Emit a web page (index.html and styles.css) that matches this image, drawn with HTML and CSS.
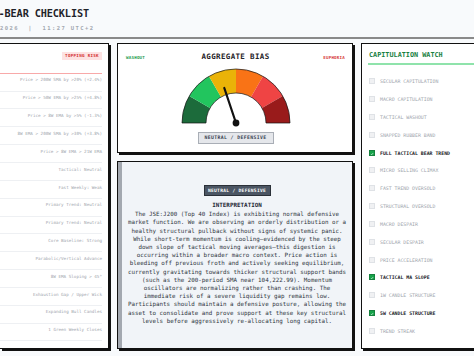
FILE: index.html
```html
<!DOCTYPE html>
<html lang="en">
<head>
<meta charset="utf-8">
<title>Bear Checklist</title>
<link rel="stylesheet" href="styles.css">
</head>
<body>
<header class="top">
  <h1 class="title">-BEAR CHECKLIST</h1>
  <div class="meta">2026  |  11:27 UTC+2</div>
</header>
<main class="grid">
  <section class="panel panel-left">
    <div class="left-head"><span class="risk-badge">TOPPING RISK</span></div>
    <ul class="rows">
      <li class="row">Price &gt; 200W SMA by &gt;20% (+2.4%)</li>
      <li class="row">Price &gt; 50W EMA by &gt;25% (+4.8%)</li>
      <li class="row">Price &gt; 8W EMA by &gt;5% (-1.3%)</li>
      <li class="row">8W EMA &gt; 200W SMA by &gt;30% (+3.8%)</li>
      <li class="row">Price &gt; 8W EMA &gt; 21W EMA</li>
      <li class="row">Tactical: Neutral</li>
      <li class="row">Fast Weekly: Weak</li>
      <li class="row">Primary Trend: Neutral</li>
      <li class="row">Primary Trend: Neutral</li>
      <li class="row">Core Baseline: Strong</li>
      <li class="row">Parabolic/Vertical Advance</li>
      <li class="row">8W EMA Sloping &gt; 45°</li>
      <li class="row">Exhaustion Gap / Upper Wick</li>
      <li class="row">Expanding Bull Candles</li>
      <li class="row">1 Green Weekly Closes</li>
    </ul>
  </section>

  <div class="center">
    <section class="gauge-card">
      <div class="gauge-labels">
        <span class="lbl lbl-wash">WASHOUT</span>
        <span class="gauge-title">AGGREGATE BIAS</span>
        <span class="lbl lbl-eup">EUPHORIA</span>
      </div>
      <svg class="gauge" width="112" height="60" viewBox="-56 -55 112 60" aria-hidden="true">
        <path d="M-54 0 A54 54 0 0 1 -46.77 -27 L-25.98 -15 A30 30 0 0 0 -30 0 Z" fill="#1c6b3b"/>
        <path d="M-46.77 -27 A54 54 0 0 1 -27 -46.77 L-15 -25.98 A30 30 0 0 0 -25.98 -15 Z" fill="#22c55e"/>
        <path d="M-27 -46.77 A54 54 0 0 1 0 -54 L0 -30 A30 30 0 0 0 -15 -25.98 Z" fill="#eab308"/>
        <path d="M0 -54 A54 54 0 0 1 27 -46.77 L15 -25.98 A30 30 0 0 0 0 -30 Z" fill="#f97316"/>
        <path d="M27 -46.77 A54 54 0 0 1 46.77 -27 L25.98 -15 A30 30 0 0 0 15 -25.98 Z" fill="#ef4444"/>
        <path d="M46.77 -27 A54 54 0 0 1 54 0 L30 0 A30 30 0 0 0 25.98 -15 Z" fill="#991b1b"/>
        <path d="M-54 0 A54 54 0 0 1 54 0 L30 0 A30 30 0 0 0 -30 0 Z" fill="none" stroke="#111" stroke-width="0.7"/>
        <line x1="0" y1="0" x2="-11.7" y2="-35" stroke="#111" stroke-width="2.2" stroke-linecap="round"/>
        <circle cx="0" cy="0" r="3.4" fill="#111"/>
      </svg>
      <div class="gauge-state">NEUTRAL / DEFENSIVE</div>
    </section>

    <section class="interp">
      <span class="interp-badge">NEUTRAL / DEFENSIVE</span>
      <h2 class="interp-title">INTERPRETATION</h2>
      <p class="interp-text">The JSE:J200 (Top 40 Index) is exhibiting normal defensive market function. We are observing an orderly distribution or a healthy structural pullback without signs of systemic panic. While short-term momentum is cooling—evidenced by the steep down slope of tactical moving averages—this digestion is occurring within a broader macro context. Price action is bleeding off previous froth and actively seeking equilibrium, currently gravitating towards thicker structural support bands (such as the 200-period SMA near 104,222.99). Momentum oscillators are normalizing rather than crashing. The immediate risk of a severe liquidity gap remains low. Participants should maintain a defensive posture, allowing the asset to consolidate and prove support at these key structural levels before aggressively re-allocating long capital.</p>
    </section>
  </div>

  <section class="panel panel-right">
    <div class="right-head"><h2 class="cap-title">CAPITULATION WATCH</h2></div>
    <ul class="checks">
      <li class="check"><span class="box"></span>SECULAR CAPITULATION</li>
      <li class="check"><span class="box"></span>MACRO CAPITULATION</li>
      <li class="check"><span class="box"></span>TACTICAL WASHOUT</li>
      <li class="check"><span class="box"></span>SNAPPED RUBBER BAND</li>
      <li class="check is-on"><span class="box"><svg width="6" height="6" viewBox="0 0 6 6"><path d="M1.4 3.1 L2.5 4.2 L4.6 1.7" fill="none" stroke="#fff" stroke-width="0.9"/></svg></span>FULL TACTICAL BEAR TREND</li>
      <li class="check"><span class="box"></span>MICRO SELLING CLIMAX</li>
      <li class="check"><span class="box"></span>FAST TREND OVERSOLD</li>
      <li class="check"><span class="box"></span>STRUCTURAL OVERSOLD</li>
      <li class="check"><span class="box"></span>MACRO DESPAIR</li>
      <li class="check"><span class="box"></span>SECULAR DESPAIR</li>
      <li class="check"><span class="box"></span>PRICE ACCELERATION</li>
      <li class="check is-on"><span class="box"><svg width="6" height="6" viewBox="0 0 6 6"><path d="M1.4 3.1 L2.5 4.2 L4.6 1.7" fill="none" stroke="#fff" stroke-width="0.9"/></svg></span>TACTICAL MA SLOPE</li>
      <li class="check"><span class="box"></span>1W CANDLE STRUCTURE</li>
      <li class="check is-on"><span class="box"><svg width="6" height="6" viewBox="0 0 6 6"><path d="M1.4 3.1 L2.5 4.2 L4.6 1.7" fill="none" stroke="#fff" stroke-width="0.9"/></svg></span>5W CANDLE STRUCTURE</li>
      <li class="check"><span class="box"></span>TREND STREAK</li>
    </ul>
  </section>
</main>
</body>
</html>
```

FILE: styles.css
```css
* { box-sizing: border-box; }

html, body {
  margin: 0;
  padding: 0;
  width: 474px;
  height: 356px;
  overflow: hidden;
}

body {
  background: #f8fafc;
  font-family: "DejaVu Sans Mono", "Liberation Mono", monospace;
  color: #1f2937;
}

.top {
  padding: 8px 0 4.5px 0;
  border-bottom: 2px solid #8a8a8a;
}

.title {
  margin: 0 0 0 -1.5px;
  font-size: 10.2px;
  line-height: 12px;
  font-weight: bold;
  color: #1f2329;
  letter-spacing: -0.1px;
}

.meta {
  margin-top: 5px;
  font-size: 5.5px;
  line-height: 7px;
  font-weight: bold;
  color: #a3a8b1;
  letter-spacing: 1.41px;
  white-space: pre;
}

.grid {
  margin-top: 4.5px;
  width: 490px;
  height: 306px;
  display: grid;
  grid-template-columns: 109px 236px 129px;
  column-gap: 8px;
}

.panel {
  background: #fff;
  border: 1px solid #111;
  box-shadow: 2px 2px 0 #111;
}

.panel-left {
  border-left: none;
  padding-right: 6px;
}

.left-head {
  display: flex;
  justify-content: flex-end;
  padding: 7.5px 0 13.3px 0;
  border-bottom: 1.7px solid #f8a9a9;
}

.risk-badge {
  display: block;
  width: 40px;
  height: 8px;
  line-height: 8px;
  text-align: center;
  background: #fde2e2;
  color: #d32f2f;
  font-size: 4.2px;
  font-weight: bold;
  letter-spacing: 0.3px;
}

.rows, .checks {
  list-style: none;
  margin: 0;
  padding: 0;
}

.row {
  height: 17.85px;
  padding-top: 3.7px;
  line-height: 6px;
  font-size: 4.25px;
  color: #a0a5ad;
  text-align: right;
  border-bottom: 1px solid #eef0f3;
  white-space: nowrap;
}

.center {
  display: flex;
  flex-direction: column;
  gap: 8.5px;
}

.gauge-card {
  background: #fff;
  border: 1px solid #111;
  box-shadow: 2px 2px 0 #111;
  padding: 9.2px 7px 7.5px 8px;
  display: flex;
  flex-direction: column;
  align-items: center;
}

.gauge-labels {
  width: 100%;
  display: grid;
  grid-template-columns: 1fr auto 1fr;
  align-items: center;
  height: 8px;
}

.lbl {
  font-size: 4.2px;
  font-weight: bold;
  letter-spacing: 0.2px;
}

.lbl-wash { color: #1f9d4f; justify-self: start; }
.lbl-eup { color: #d63a3a; justify-self: end; }

.gauge-title {
  font-size: 7.5px;
  line-height: 8px;
  font-weight: bold;
  color: #1f2329;
  letter-spacing: 0.35px;
}

.gauge {
  display: block;
  margin-top: 7.3px;
}

.gauge-state {
  margin-top: 4px;
  width: 76px;
  height: 12px;
  line-height: 10px;
  text-align: center;
  background: #e5e7eb;
  border: 1px solid #a9aeb6;
  color: #374151;
  font-size: 4.8px;
  font-weight: bold;
  letter-spacing: 0.37px;
}

.interp {
  flex: 1;
  background: #f1f4f8;
  border: 1px solid #111;
  box-shadow: inset 4px 0 0 #a3a8b0, 2px 2px 0 #111;
  display: flex;
  flex-direction: column;
  align-items: center;
  justify-content: center;
  padding-left: 4px;
}

.interp-badge {
  display: block;
  width: 67px;
  height: 11px;
  line-height: 9px;
  text-align: center;
  background: #4b5563;
  border: 1px solid #2b3038;
  color: #fff;
  font-size: 4.6px;
  font-weight: bold;
  letter-spacing: 0.3px;
}

.interp-title {
  margin: 5.75px 0 0 0;
  font-size: 5.9px;
  line-height: 6.5px;
  font-weight: bold;
  color: #1f2937;
}

.interp-text {
  margin: 1.6px 0 0 0;
  width: 62.5ch;
  font-size: 5.85px;
  line-height: 8.2px;
  text-align: center;
  color: #2e3440;
}

.panel-right {
  border-right: none;
  padding-left: 6px;
}

.right-head {
  padding: 7.2px 0 3.8px 1px;
  border-bottom: 2px solid #8fe3ab;
  margin-bottom: 9.5px;
}

.cap-title {
  margin: 0;
  font-size: 6.8px;
  line-height: 8px;
  font-weight: bold;
  color: #17803f;
}

.check {
  height: 17.85px;
  padding-bottom: 4.5px;
  display: flex;
  align-items: center;
  gap: 5px;
  padding-left: 1px;
  font-size: 4.85px;
  line-height: 6px;
  color: #a0a5ad;
  white-space: nowrap;
}

.box {
  width: 6px;
  height: 6px;
  flex: none;
  background: #f0f1f3;
  border: 0.5px solid #dfe2e6;
  display: flex;
}

.box svg { display: block; }

.check.is-on {
  color: #15181d;
  font-weight: bold;
}

.check.is-on .box {
  background: #16a34a;
  border-color: #15803d;
}
```
